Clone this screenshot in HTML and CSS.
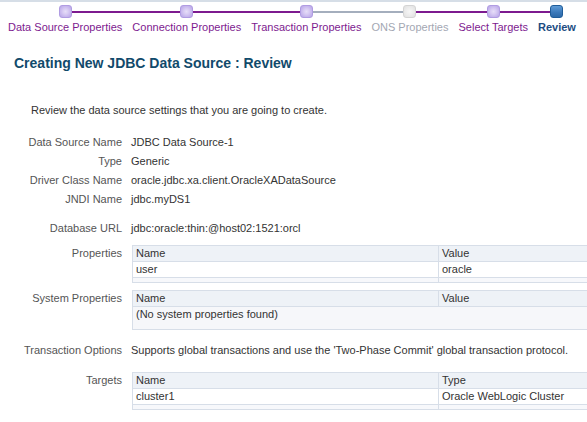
FILE: index.html
```html
<!DOCTYPE html>
<html>
<head>
<meta charset="utf-8">
<link rel="stylesheet" href="styles.css">
</head>
<body>
<div class="train">
  <div class="step done">
    <div class="stop-row"><span class="line none"></span><span class="stop"></span><span class="line purple"></span></div>
    <div class="step-label">Data Source Properties</div>
  </div>
  <div class="step done">
    <div class="stop-row"><span class="line purple"></span><span class="stop"></span><span class="line purple"></span></div>
    <div class="step-label">Connection Properties</div>
  </div>
  <div class="step done">
    <div class="stop-row"><span class="line purple"></span><span class="stop"></span><span class="line gray"></span></div>
    <div class="step-label">Transaction Properties</div>
  </div>
  <div class="step disabled">
    <div class="stop-row"><span class="line gray"></span><span class="stop"></span><span class="line purple"></span></div>
    <div class="step-label">ONS Properties</div>
  </div>
  <div class="step done">
    <div class="stop-row"><span class="line purple"></span><span class="stop"></span><span class="line purple"></span></div>
    <div class="step-label">Select Targets</div>
  </div>
  <div class="step current">
    <div class="stop-row"><span class="line purple"></span><span class="stop"></span><span class="line none"></span></div>
    <div class="step-label">Review</div>
  </div>
</div>

<h1 class="title">Creating New JDBC Data Source : Review</h1>

<p class="intro">Review the data source settings that you are going to create.</p>

<div class="form">
  <div class="row"><div class="label">Data Source Name</div><div class="value">JDBC Data Source-1</div></div>
  <div class="row"><div class="label">Type</div><div class="value">Generic</div></div>
  <div class="row"><div class="label">Driver Class Name</div><div class="value">oracle.jdbc.xa.client.OracleXADataSource</div></div>
  <div class="row"><div class="label">JNDI Name</div><div class="value">jdbc.myDS1</div></div>
  <div class="row spaced"><div class="label">Database URL</div><div class="value">jdbc:oracle:thin:@host02:1521:orcl</div></div>

  <div class="row table-row first-table">
    <div class="label">Properties</div>
    <table class="grid">
      <thead><tr><th class="c1">Name</th><th>Value</th></tr></thead>
      <tbody>
        <tr><td class="c1">user</td><td>oracle</td></tr>
        <tr class="foot"><td class="c1"></td><td></td></tr>
      </tbody>
    </table>
  </div>

  <div class="row table-row second-table">
    <div class="label">System Properties</div>
    <table class="grid">
      <thead><tr><th class="c1">Name</th><th>Value</th></tr></thead>
      <tbody>
        <tr class="empty"><td colspan="2">(No system properties found)</td></tr>
      </tbody>
    </table>
  </div>

  <div class="row after-table"><div class="label">Transaction Options</div><div class="value">Supports global transactions and use the 'Two-Phase Commit' global transaction protocol.</div></div>

  <div class="row table-row third-table">
    <div class="label">Targets</div>
    <table class="grid">
      <thead><tr><th class="c1">Name</th><th>Type</th></tr></thead>
      <tbody>
        <tr><td class="c1">cluster1</td><td>Oracle WebLogic Cluster</td></tr>
        <tr class="foot"><td class="c1"></td><td></td></tr>
      </tbody>
    </table>
  </div>
</div>
</body>
</html>
```
FILE: styles.css
```css
html, body {
  margin: 0;
  padding: 0;
  background: #ffffff;
  overflow: hidden;
}
body {
  font-family: "Liberation Sans", Arial, sans-serif;
  font-size: 11px;
  color: #333333;
  width: 587px;
  height: 422px;
}

/* ---- train ---- */
.train {
  display: flex;
  border-top: 2px solid #d6dee7;
  padding: 3px 0 0 3px;
}
.step {
  display: flex;
  flex-direction: column;
  align-items: stretch;
  padding: 0 5px;
}
.stop-row {
  display: flex;
  align-items: center;
  height: 13px;
  margin: 0 -5px;
}
.line {
  flex: 1;
  height: 2px;
}
.line.purple { background: #7d1a8f; }
.line.gray { background: #a4aebd; }
.line.none { background: transparent; }
.stop {
  flex: none;
  width: 11px;
  height: 11px;
  border-radius: 3px;
  border: 1px solid #b09ce2;
  background: radial-gradient(circle at 50% 50%, #e6def8 0, #d8cbf3 35%, #c3b2ec 75%, #b9a6e8 100%);
}
.disabled .stop {
  border-color: #d4d4d4;
  background: radial-gradient(circle at 50% 50%, #f6f6f6 0, #ececec 50%, #e0e0e0 100%);
}
.current .stop {
  border-color: #1f5c99;
  background: linear-gradient(#5e9bd6, #3a78b9 60%, #2c69a8);
}
.step-label {
  margin-top: 3px;
  line-height: 13px;
  text-align: center;
  white-space: nowrap;
  color: #7d1a8f;
}
.disabled .step-label { color: #a3a7b3; }
.current .step-label { color: #1d4c82; font-weight: bold; }

/* ---- title ---- */
.title {
  margin: 20px 0 0 14px;
  font-size: 14px;
  line-height: 18px;
  font-weight: bold;
  color: #114a6b;
}
.intro {
  margin: 29px 0 0 31px;
  line-height: 19px;
}

/* ---- form ---- */
.form {
  margin-top: 13px;
}
.row {
  display: flex;
  column-gap: 9px;
  line-height: 19px;
}
.label {
  flex: none;
  width: 122px;
  text-align: right;
  color: #555555;
  white-space: nowrap;
}
.value {
  white-space: nowrap;
  color: #333333;
}
.row.spaced { margin-top: 10px; }
.table-row .label { line-height: 16px; }
.first-table { margin-top: 6.5px; }
.second-table { margin-top: 7px; }
.after-table { margin-top: 11.5px; }
.third-table { margin-top: 11.5px; }

.grid {
  flex: none;
  width: 470px;
  border-collapse: collapse;
  font-size: 11px;
  margin-left: 1px;
}
.grid th, .grid td {
  border: 1px solid #d7dee8;
  padding: 0 3px;
  height: 15px;
  line-height: 15px;
  text-align: left;
  font-weight: normal;
  color: #333333;
  white-space: nowrap;
}
.grid th {
  background: #eef2f7;
}
.grid td {
  background: #ffffff;
}
.grid .c1 { width: 299px; }
.grid tr.foot td {
  height: 4px;
  line-height: 4px;
  padding: 0;
  background: #f7f8fb;
}
.grid tr.empty td {
  height: 22px;
  vertical-align: top;
  background: #f6f7fa;
  padding-top: 0;
}
```
